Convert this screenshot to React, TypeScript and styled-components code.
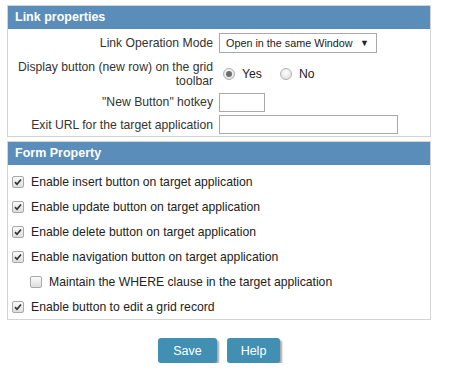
import { createGlobalStyle, styled } from 'styled-components';

const GlobalStyle = createGlobalStyle`
  body {
    margin: 0;
    background: #fff;
    font-family: "Liberation Sans", Arial, sans-serif;
    font-size: 12.2px;
    color: #333;
  }
`;

const Page = styled.div`
  width: 457px;
  padding: 5px 0 0 7px;
  box-sizing: border-box;
`;

const Panel = styled.section<{ $gap?: number }>`
  width: 424px;
  box-sizing: border-box;
  border: 1px solid #d4d4d4;
  margin-bottom: ${(p) => p.$gap ?? 0}px;
`;

const Header = styled.div`
  background: #5a8db9;
  color: #fff;
  font-weight: bold;
  font-size: 12.5px;
  height: 23px;
  line-height: 23px;
  padding-left: 7px;
`;

const PropGrid = styled.div`
  display: grid;
  grid-template-columns: 205px 1fr;
  column-gap: 6px;
`;

const Label = styled.div<{ $h: number }>`
  min-height: ${(p) => p.$h}px;
  display: flex;
  align-items: center;
  justify-content: flex-end;
  text-align: right;
  line-height: 14px;
`;

const Value = styled.div<{ $h: number }>`
  min-height: ${(p) => p.$h}px;
  display: flex;
  align-items: center;
`;

const SelectBox = styled.div`
  position: relative;
  width: 158px;
  height: 20px;
  box-sizing: border-box;
  border: 1px solid #a9a9a9;
  padding-left: 6px;
  line-height: 18px;
  font-size: 10.8px;
  color: #222;
  white-space: nowrap;
`;

const Arrow = styled.span`
  position: absolute;
  right: 7px;
  top: 0;
  font-size: 9px;
`;

const TextInput = styled.input<{ $w: number }>`
  width: ${(p) => p.$w}px;
  height: 19px;
  box-sizing: border-box;
  border: 1px solid #a9a9a9;
  margin: 0;
  padding: 0 3px;
  outline: none;
`;

const Radio = styled.span<{ $on?: boolean }>`
  width: 12px;
  height: 12px;
  box-sizing: border-box;
  border-radius: 50%;
  border: 1px solid #b0b0b0;
  background: radial-gradient(circle at 50% 35%, #fdfdfd, #dcdcdc);
  display: inline-flex;
  align-items: center;
  justify-content: center;
  margin: 0 7px 0 4px;
  &::after {
    content: '';
    width: 6px;
    height: 6px;
    border-radius: 50%;
    background: ${(p) => (p.$on ? '#6d6d6d' : 'transparent')};
  }
`;

const RadioText = styled.span`
  margin-right: 14px;
  color: #222;
`;

const CheckList = styled.div`
  display: flex;
  flex-direction: column;
  padding: 4px 0 0 0;
`;

const CheckRow = styled.label<{ $indent?: boolean }>`
  display: flex;
  align-items: center;
  height: 25px;
  padding-left: ${(p) => (p.$indent ? 22 : 4)}px;
  gap: 7px;
  color: #222;
`;

const Box = styled.span`
  width: 12px;
  height: 12px;
  box-sizing: border-box;
  border: 1px solid #a8a8a8;
  border-radius: 2px;
  background: linear-gradient(#fafafa, #dedede);
  display: inline-flex;
  align-items: center;
  justify-content: center;
`;

const Buttons = styled.div`
  display: flex;
  justify-content: center;
  gap: 10px;
  width: 424px;
  margin-top: 18px;
`;

const Button = styled.button<{ $w: number }>`
  width: ${(p) => p.$w}px;
  height: 25px;
  border: none;
  border-radius: 3px;
  background: #418fb3;
  color: #fff;
  font-family: "Liberation Sans", Arial, sans-serif;
  font-size: 12.5px;
  box-shadow: 2px 2px 2px rgba(0, 0, 0, 0.35);
  padding: 0;
`;

const Check = ({ on }: { on: boolean }) => (
  <Box>
    {on && (
      <svg width="8" height="8" viewBox="0 0 8 8">
        <path d="M1 4.2 L3 6.3 L7 1.5" stroke="#333" strokeWidth="1.7" fill="none" />
      </svg>
    )}
  </Box>
);

const checks = [
  { text: 'Enable insert button on target application', on: true },
  { text: 'Enable update button on target application', on: true },
  { text: 'Enable delete button on target application', on: true },
  { text: 'Enable navigation button on target application', on: true },
  { text: 'Maintain the WHERE clause in the target application', on: false, indent: true },
  { text: 'Enable button to edit a grid record', on: true },
];

export default function App() {
  return (
    <Page>
      <GlobalStyle />
      <Panel $gap={4}>
        <Header>Link properties</Header>
        <PropGrid>
          <Label $h={27}>Link Operation Mode</Label>
          <Value $h={27}>
            <SelectBox>
              Open in the same Window
              <Arrow>▼</Arrow>
            </SelectBox>
          </Value>
          <Label $h={35}>Display button (new row) on the grid toolbar</Label>
          <Value $h={35}>
            <Radio $on />
            <RadioText>Yes</RadioText>
            <Radio />
            <RadioText>No</RadioText>
          </Value>
          <Label $h={22}>"New Button" hotkey</Label>
          <Value $h={22}>
            <TextInput $w={46} />
          </Value>
          <Label $h={23}>Exit URL for the target application</Label>
          <Value $h={23}>
            <TextInput $w={179} />
          </Value>
        </PropGrid>
      </Panel>
      <Panel>
        <Header>Form Property</Header>
        <CheckList>
          {checks.map((c) => (
            <CheckRow key={c.text} $indent={c.indent}>
              <Check on={c.on} />
              {c.text}
            </CheckRow>
          ))}
        </CheckList>
      </Panel>
      <Buttons>
        <Button $w={59}>Save</Button>
        <Button $w={53}>Help</Button>
      </Buttons>
    </Page>
  );
}
